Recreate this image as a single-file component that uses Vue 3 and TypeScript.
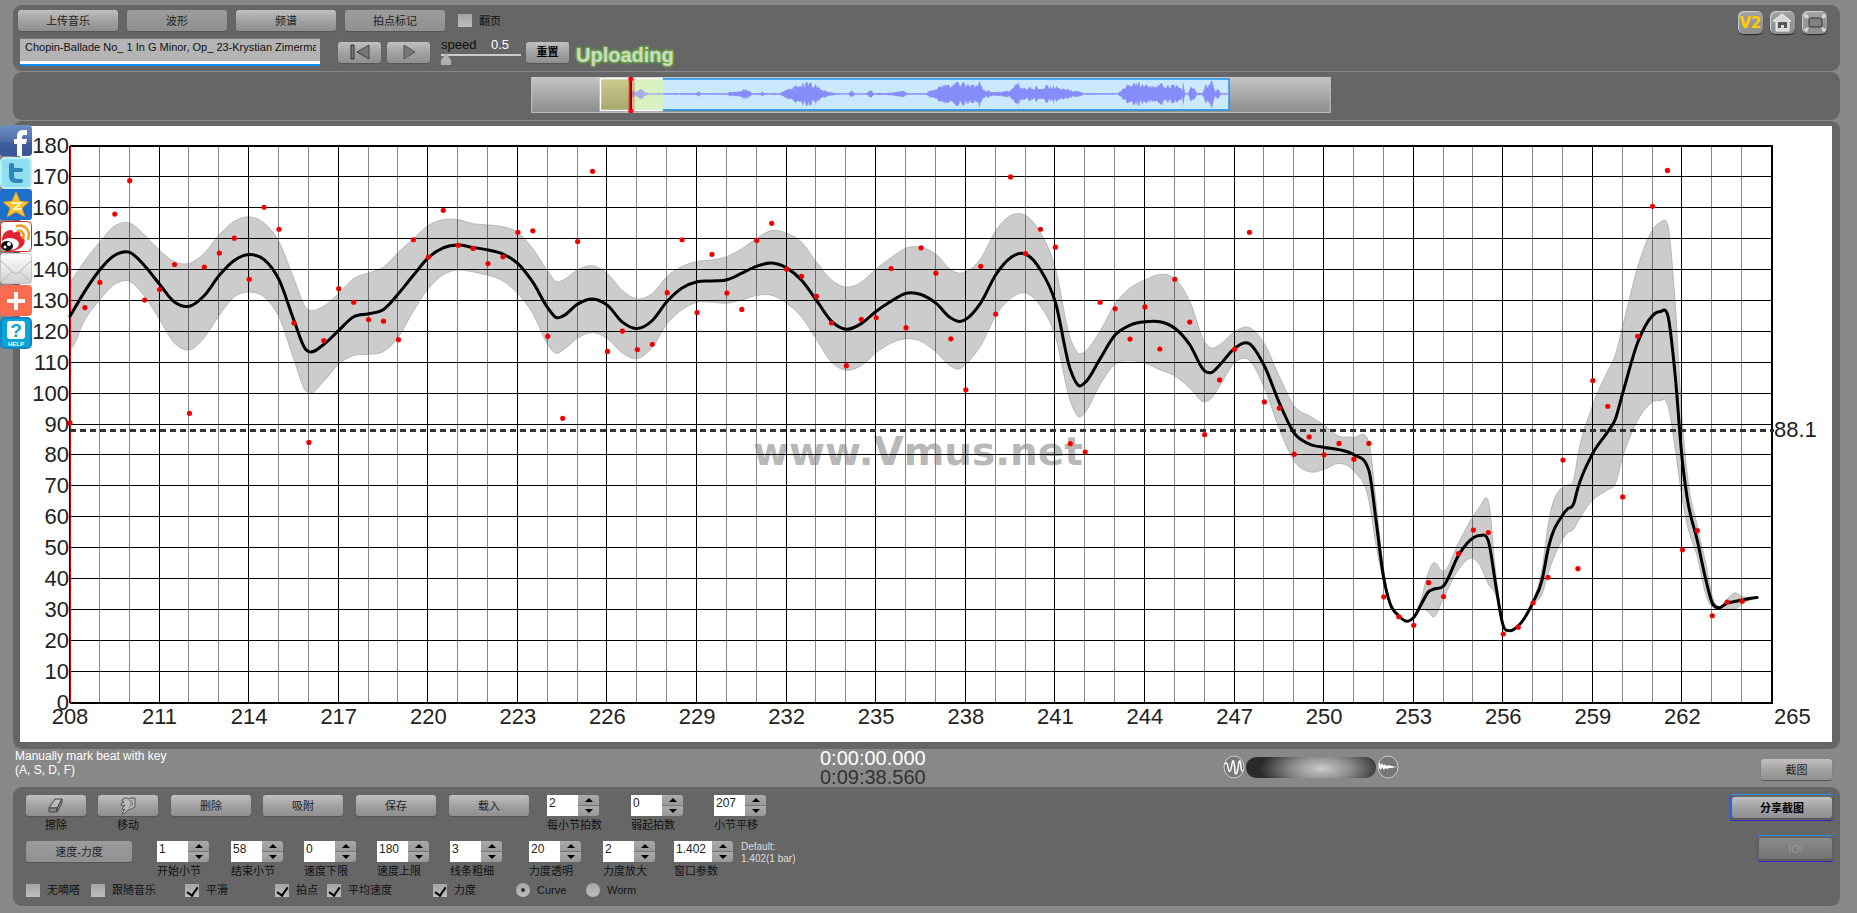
<script setup lang="ts">
import { ref } from 'vue'

type Row = [number, number, number, number]

interface Stepper {
  id: string
  label: string
  value: string
  wide?: boolean
}

const title = ref('Chopin-Ballade No_ 1 In G Minor, Op_ 23-Krystian Zimerman')
const speed = ref(0)
const volume = ref(50)
const mode = ref('curve')

/* Chart geometry, in view box units */
const LEFT = 50
const RIGHT = 1752
const TOP = 20
const BOTTOM = 577
const FIRST = 208
const LAST = 265
const px = (bar: number): number => LEFT + ((bar - FIRST) * (RIGHT - LEFT)) / (LAST - FIRST)
const py = (v: number): number => BOTTOM - (v * (BOTTOM - TOP)) / 180

const bars = Array.from({ length: LAST - FIRST }, (_, i) => FIRST + i)
const tempos = Array.from({ length: 19 }, (_, i) => i * 10)

/* Tempo of each half bar, starting at bar 208 */
const beats: number[] = [
  90.5, 127.8, 135.9, 158, 168.8, 130.2, 133.6, 141.7, 93.6, 140.9, 145.4, 150.2, 136.9, 160.2, 153.1, 122.8,
  84.2, 117.1, 133.9, 129.5, 123.9, 123.4, 117.4, 149.7, 144.1, 159.2, 147.9, 146.9, 142, 144.2, 152.1, 152.6,
  118.5, 92, 149.1, 171.8, 113.6, 120.2, 114.2, 115.9, 132.6, 149.7, 126.2, 145, 132.5, 127.2, 149.5, 155,
  140.2, 137.9, 131.4, 122.8, 109, 124, 124.5, 140.4, 121.3, 147.1, 138.9, 117.7, 101.2, 141.1, 125.7, 170,
  145.2, 153.1, 147.3, 83.8, 81.1, 129.5, 127.4, 117.6, 128, 114.4, 136.9, 123.1, 86.7, 104.4, 114.3, 152.1,
  97.3, 95.3, 80.4, 86, 80.2, 83.9, 78.8, 83.9, 34.3, 27.9, 25.1, 38.9, 34.4, 48.3, 55.9, 55.1, 22.3, 24.5,
  32.4, 40.6, 78.5, 43.4, 104.2, 95.9, 66.6, 118.5, 160.5, 172.1, 49.5, 55.7, 28.2, 32.6, 32.9,
]
const dots = beats.map((v, i) => ({ x: px(FIRST + i / 2), y: py(v) }))

/* Smoothed curve: bar, tempo, upper edge and lower edge of the loudness band */
const curve: Row[] = [
  [208, 125, 135.8, 114.5], [208.5, 133.1, 143, 123.9], [209, 140, 149, 130.3], [209.5, 144.7, 154.2, 135.3],
  [210, 145.6, 155.1, 136.2], [210.5, 141.3, 151.2, 131.4], [211, 135.3, 146.3, 123.9], [211.5, 129.6, 142.6, 116.3],
  [212, 128.2, 142.1, 114.1], [212.5, 131.7, 145.4, 118.1], [213, 138.2, 151.3, 125.3], [213.5, 143, 155.7, 131.2],
  [214, 144.9, 157.1, 132.8], [214.5, 143.3, 155.1, 131.2], [215, 136.8, 149, 124.7], [215.5, 123.7, 137.1, 111],
  [215.9, 114.2, 127.8, 100.8], [216, 113.6, 127.1, 100.2], [216.5, 115.9, 128.3, 104], [217, 120.4, 132.3, 109.5],
  [217.5, 124.8, 137.2, 112.3], [218, 125.8, 139, 112.7], [218.5, 127.2, 140.9, 113.6], [219, 132.3, 145.7, 118.3],
  [219.5, 138.2, 150, 126.7], [220, 143.9, 154.3, 133.9], [220.5, 147.1, 156.2, 138.4], [221, 148, 156.2, 139.9],
  [221.5, 147.2, 154.9, 139.3], [222, 146.4, 154.5, 138.2], [222.5, 145.1, 153.9, 136.4], [223, 142, 152.1, 132.3],
  [223.5, 136, 146.8, 125.8], [224, 127.7, 139.6, 115.9], [224.3, 124.5, 136.1, 112.9], [224.5, 125, 136.6, 114],
  [225, 128.9, 140, 117.9], [225.5, 130.6, 141.3, 119.7], [226, 128.5, 138.7, 117.7], [226.5, 123.1, 133.3, 113.1],
  [227, 121, 130.6, 111.3], [227.5, 123.6, 132.3, 115], [228, 129.8, 137.9, 122.6], [228.5, 134.1, 141.1, 127.1],
  [229, 136.1, 142.7, 129.5], [229.5, 136.4, 143.2, 129.5], [230, 136.8, 144.3, 129.2], [230.5, 138.9, 146.8, 130.3],
  [231, 141.2, 150.2, 131.7], [231.5, 142.2, 152.7, 131.8], [232, 140.6, 151.8, 129.2], [232.5, 136.6, 148.9, 124.7],
  [233, 130.1, 142.5, 117.5], [233.5, 123.4, 136.8, 110.2], [234, 120.8, 134.4, 107.5], [234.5, 122.6, 136, 109.1],
  [235, 126.6, 140.3, 113.2], [235.5, 129.8, 143.9, 116.3], [236, 132.4, 147, 117.7], [236.5, 132, 147.3, 116.9],
  [237, 129.2, 145, 113.4], [237.5, 124.4, 140, 108.8], [237.8, 123.3, 138.9, 108], [238, 124, 139.3, 109.5],
  [238.5, 129.3, 143.6, 115.5], [239, 138.3, 152.6, 125.1], [239.5, 143.9, 157.5, 130.7], [240, 145.1, 157.6, 132.5],
  [240.5, 140, 152, 128.3], [241, 129.5, 140.6, 118.5], [241.5, 107.8, 117.9, 97.6], [241.8, 102.5, 112.9, 92.4],
  [242, 103.6, 113.7, 94], [242.5, 111.3, 120.3, 103], [243, 118.9, 128.9, 109.5], [243.5, 122.1, 134.1, 110.6],
  [244, 123.2, 136.7, 109.8], [244.5, 123.2, 138.5, 107.7], [245, 121.1, 137.1, 105.7], [245.5, 115.8, 129.9, 101.8],
  [246, 107.3, 116.7, 97.3], [246.2, 106.7, 114.8, 98.2], [246.5, 109.2, 115.8, 102.4], [247, 114.6, 120, 109.9],
  [247.5, 116.1, 121.3, 110.7], [248, 108.9, 116.1, 101.8], [248.5, 97, 105.6, 88.6], [249, 87.2, 96, 78.2],
  [249.5, 83.7, 92.8, 74.7], [250, 82.6, 89.8, 75.5], [250.5, 81.9, 86.2, 77.4], [251, 80.2, 85.9, 74.9],
  [251.5, 75.1, 84.3, 65.3], [251.75, 58.1, 64, 50.3], [252, 40.2, 43, 39], [252.2, 32.4, 32.9, 32],
  [252.5, 28.2, 28.4, 28], [252.8, 26.4, 26.6, 26.2], [253, 27.6, 28, 27.2], [253.25, 31.8, 33.6, 30.2],
  [253.5, 36, 42.5, 29.4], [253.65, 36.7, 45.2, 27.8], [254, 37.8, 42.5, 33.9], [254.5, 47.7, 51.7, 43.1],
  [255, 53.4, 60.5, 46.7], [255.2, 54.1, 63.2, 44.8], [255.5, 52.4, 65.3, 38.5], [255.75, 38, 42, 34.8],
  [256, 24.9, 25.4, 24.4], [256.2, 23.4, 23.6, 23.2], [256.5, 24.9, 25.1, 24.7], [257, 32.6, 33.2, 32.2],
  [257.3, 39.8, 43.5, 35.2], [257.5, 49.7, 57.6, 41.8], [258, 60.9, 69.9, 53], [258.15, 62.7, 70.5, 55],
  [258.35, 64.2, 71.9, 56.1], [258.5, 69.5, 80.1, 58.7], [259, 80.7, 96.3, 65.6], [259.5, 87.7, 107.4, 68.9],
  [259.75, 91.6, 112.4, 70.8], [260, 100.1, 121.7, 79.4], [260.5, 116.4, 140.8, 91.3], [261, 125.2, 152.9, 97.2],
  [261.25, 126.5, 155.3, 97.8], [261.5, 125.6, 154.8, 96.6], [261.75, 106.5, 130.2, 82.7], [262, 78.1, 90.6, 65.6],
  [262.15, 66.8, 75, 58], [262.5, 52.4, 57, 47.1], [262.8, 39.2, 44.4, 34.5], [263, 32.3, 34.5, 31],
  [263.2, 30.8, 31.2, 30.4], [263.5, 32.3, 33.6, 30.6], [263.75, 32.8, 35.6, 30.2], [264, 33.3, 34.5, 32],
  [264.5, 34.1, 34.1, 34.1],
]

/* Cubic segments through the points of one column, with parabolic tangents */
function segments(column: 1 | 2 | 3, reverse: boolean): string {
  const pts = curve.map((r) => [px(r[0]), py(r[column])])
  if (reverse) pts.reverse()
  const slope = pts.map((p, i) => {
    if (i === 0 || i === pts.length - 1) return 0
    const h0 = p[0] - pts[i - 1][0]
    const h1 = pts[i + 1][0] - p[0]
    const a = (p[1] - pts[i - 1][1]) / h0
    const b = (pts[i + 1][1] - p[1]) / h1
    const m = (a * h1 + b * h0) / (h0 + h1)
    const limit = 3 * Math.max(1, Math.min(Math.abs(a), Math.abs(b)))
    return Math.sign(m) * Math.min(Math.abs(m), limit)
  })
  slope[0] = (pts[1][1] - pts[0][1]) / (pts[1][0] - pts[0][0])
  let d = `${pts[0][0].toFixed(1)} ${pts[0][1].toFixed(1)}`
  for (let i = 1; i < pts.length; i++) {
    const [x0, y0] = pts[i - 1]
    const [x1, y1] = pts[i]
    const h = (x1 - x0) / 3
    d += ` C${(x0 + h).toFixed(1)} ${(y0 + slope[i - 1] * h).toFixed(1)} ${(x1 - h).toFixed(1)} ${(y1 - slope[i] * h).toFixed(1)} ${x1.toFixed(1)} ${y1.toFixed(1)}`
  }
  return d
}
const meanPath = 'M' + segments(1, false)
const bandPath = 'M' + segments(2, false) + ' L' + segments(3, true) + ' Z'

/* Loudness envelope of the overview: x, half height */
const envelope: [number, number][] = [
  [101, 1], [102, 5], [104, 2], [106, 3], [110, 6], [114, 3], [117, 1], [165, 1], [168, 3], [171, 1], [196, 1],
  [200, 3], [206, 3], [209, 3], [214, 6], [218, 5], [221, 1], [229, 1], [232, 3], [235, 1], [248, 1], [252, 3],
  [256, 6], [262, 10], [273, 14], [283, 12], [290, 9], [294, 4], [300, 2], [305, 1], [318, 1], [321, 4], [325, 1],
  [336, 1], [340, 5], [344, 1], [363, 2], [372, 4], [378, 1], [396, 1], [401, 5], [404, 4], [409, 9], [414, 13],
  [430, 14], [445, 11], [451, 15], [455, 5], [462, 3], [470, 3], [480, 4], [485, 9], [490, 14], [494, 6], [500, 9],
  [512, 9], [525, 11], [532, 6], [542, 5], [550, 3], [555, 1], [588, 1], [593, 5], [598, 12], [604, 16], [612, 12],
  [630, 12], [642, 12], [650, 9], [653, 6], [654, 18], [656, 1], [659, 1], [662, 12], [666, 6], [668, 1], [673, 2],
  [678, 14], [683, 18], [686, 3], [688, 8], [692, 1], [700, 1],
]
function wavePath(): string {
  let up = ''
  let down = ''
  let k = 0
  let seed = 7
  for (let x = 101; x <= 700; x++) {
    while (k < envelope.length - 2 && envelope[k + 1][0] < x) k++
    const [x0, a0] = envelope[k]
    const [x1, a1] = envelope[k + 1]
    const base = a0 + ((a1 - a0) * (x - x0)) / (x1 - x0)
    seed = (seed * 1103 + 12345) % 65536
    const j = 0.45 + (0.5 * seed) / 65536
    const a = Math.max(0.6, base * j)
    up += ` L${x} ${(17 - a).toFixed(1)}`
    down = ` L${x} ${(17 + a).toFixed(1)}` + down
  }
  return 'M101 17' + up + down + ' Z'
}
const wave = wavePath()

const beatSteppers: Stepper[] = [
  { id: 'beats', label: '每小节拍数', value: '2' },
  { id: 'pickup', label: '弱起拍数', value: '0' },
  { id: 'shift', label: '小节平移', value: '207' },
]
const viewSteppers: Stepper[] = [
  { id: 'start', label: '开始小节', value: '1' },
  { id: 'end', label: '结束小节', value: '58' },
  { id: 'low', label: '速度下限', value: '0' },
  { id: 'high', label: '速度上限', value: '180' },
  { id: 'line', label: '线条粗细', value: '3' },
  { id: 'alpha', label: '力度透明', value: '20' },
  { id: 'gain', label: '力度放大', value: '2' },
  { id: 'window', label: '窗口参数', value: '1.402', wide: true },
]
const checks = [
  { label: '无嘀嗒', on: false },
  { label: '跟随音乐', on: false },
  { label: '平滑', on: true },
  { label: '拍点', on: true },
  { label: '平均速度', on: true },
  { label: '力度', on: true },
]
</script>

<template>
  <div class="page">
    <nav class="social" aria-label="Share">
      <a href="#facebook" aria-label="Facebook">
        <svg viewBox="0 0 32 32">
          <defs><linearGradient id="fb" x2="0" y2="1"><stop stop-color="#6e8fc6" /><stop offset="1" stop-color="#34508f" /></linearGradient></defs>
          <rect width="32" height="31" rx="4" fill="url(#fb)" />
          <path d="M0 17h32v10a4 4 0 0 1-4 4H4a4 4 0 0 1-4-4z" fill="#3b5998" opacity=".7" />
          <path d="M17 31V19h-3v-5h3v-3c0-4 3-6 6-6h4v5h-3c-1 0-2 1-2 2v2h5l-1 5h-4v12z" fill="#fff" />
        </svg>
      </a>
      <a href="#twitter" aria-label="Twitter">
        <svg viewBox="0 0 32 32">
          <rect x="1" y="1" width="30" height="30" rx="4" fill="#8fdff0" stroke="#b9f0f5" stroke-width="2" />
          <path d="M9 7q3-2 5 0v4h7q2 0 2 2t-2 2h-7v4q0 3 3 3h4q2 0 2 2t-2 2h-5q-7 0-7-7z" fill="#2c86b8" />
        </svg>
      </a>
      <a href="#qzone" aria-label="QZone">
        <svg viewBox="0 0 32 32">
          <rect width="32" height="31" rx="3" fill="#1c6fcb" />
          <path d="M16 3l4 9 9 1-7 6 3 9-9-5-9 5 3-9-7-6 9-1z" fill="#fdbf2d" stroke="#e69a10" stroke-width=".6" />
          <path d="M11 14h10l-7 6h8" fill="none" stroke="#fff3b0" stroke-width="2" />
        </svg>
      </a>
      <a href="#weibo" aria-label="Weibo">
        <svg viewBox="0 0 32 32">
          <rect x=".5" y=".5" width="31" height="30" rx="4" fill="#fff" stroke="#c92a1e" />
          <path d="M2 19c0-6 4-10 9-10 2 0 2 2 3 3 4-3 8-1 6 3 4 1 6 4 4 8-2 4-8 7-13 7-5 0-9-5-9-11z" fill="#e02431" />
          <ellipse cx="10" cy="23" rx="9" ry="6" fill="#fff" />
          <ellipse cx="7" cy="25" rx="6" ry="5" fill="#111" />
          <circle cx="9" cy="23" r="2" fill="#fff" /><circle cx="5" cy="26" r="1.500" fill="#fff" />
          <path d="M18 10c4-1 7 3 5 7M17 5c8-2 14 5 11 13" fill="none" stroke="#f5991f" stroke-width="2.500" stroke-linecap="round" />
        </svg>
      </a>
      <a href="#mail" aria-label="Mail">
        <svg viewBox="0 0 32 32">
          <defs><linearGradient id="ml" x2="0" y2="1"><stop stop-color="#fff" /><stop offset="1" stop-color="#cfcfcf" /></linearGradient></defs>
          <rect x=".5" y=".5" width="31" height="30" rx="3" fill="url(#ml)" stroke="#c4c4c4" />
          <path d="M1 8l13 12q2 2 4 0L31 8M1 29l11-10M31 29L20 19" fill="none" stroke="#b3b3b3" />
        </svg>
      </a>
      <a href="#more" aria-label="More">
        <svg viewBox="0 0 32 32">
          <rect width="32" height="31" rx="4" fill="#fa6b4f" />
          <path d="M14 7h4v7h7v4h-7v7h-4v-7H7v-4h7z" fill="#fff" />
        </svg>
      </a>
      <a href="#help" aria-label="Help">
        <svg viewBox="0 0 32 32">
          <rect x="1" y="1" width="30" height="30" rx="4" fill="#0aa5d6" stroke="#0b86c6" stroke-width="2" />
          <rect x="7" y="4" width="18" height="18" rx="3" fill="#fff" />
          <text x="16" y="20" class="help-mark">?</text>
          <text x="16" y="29" class="help-word">HELP</text>
        </svg>
      </a>
    </nav>

    <header class="panel top">
      <div class="tools">
        <div class="line first">
          <button class="btn w100">上传音乐</button>
          <button class="btn w100 flat">波形</button>
          <button class="btn w100">频谱</button>
          <button class="btn w100 flat">拍点标记</button>
          <label class="tick"><input type="checkbox" />翻页</label>
        </div>
        <div class="line second">
          <input v-model="title" class="title" type="text" aria-label="Title" />
          <div class="transport">
            <button class="btn w43" aria-label="Back to start">
              <svg width="22" height="16" viewBox="0 0 22 16"><path d="M2 1h3v14H2z" fill="#777" stroke="#333" /><path d="M20 1v14L8 8z" fill="#777" stroke="#444" /></svg>
            </button>
            <button class="btn w43" aria-label="Play">
              <svg width="16" height="16" viewBox="0 0 16 16"><path d="M3 1v14l11-7z" fill="#777" stroke="#555" /></svg>
            </button>
          </div>
          <div class="speed">
            <label for="speed">speed</label><output for="speed">0.5</output>
            <input id="speed" v-model.number="speed" type="range" min="0" max="100" />
          </div>
          <button class="btn w43 strong">重置</button>
          <span class="uploading">Uploading</span>
        </div>
      </div>
      <div class="corner">
        <button class="chip" aria-label="Version 2"><span>V2</span></button>
        <button class="chip" aria-label="Home">
          <svg width="24" height="22" viewBox="0 0 24 22"><path d="M11 2l9 7h-2v10H5V9H2z" fill="#d8d8d8" stroke="#ececec" stroke-linejoin="round" /><path d="M7 16v-6h9v6h-3v-3h-3v3z" fill="#555" /></svg>
        </button>
        <button class="chip" aria-label="Full screen">
          <svg width="24" height="22" viewBox="0 0 24 22"><rect x="6" y="6" width="13" height="9" rx="2" fill="#808080" stroke="#333" /><path d="M5 3H2v3M19 3h3v3M5 19H2v-3M19 19h3v-3" fill="none" stroke="#ddd" /><path d="M2 3l3 3M22 3l-3 3M2 19l3-3M22 19l-3-3" stroke="#ddd" stroke-width="2" /></svg>
        </button>
      </div>
    </header>

    <section class="panel overview">
      <svg class="strip" viewBox="0 0 802 36" role="img" aria-label="Waveform overview">
        <defs>
          <linearGradient id="base" x2="0" y2="1"><stop stop-color="#c4c4c4" /><stop offset="1" stop-color="#8c8c8c" /></linearGradient>
          <linearGradient id="olive" x2="0" y2="1"><stop stop-color="#cccb8e" /><stop offset="1" stop-color="#a8a76c" /></linearGradient>
        </defs>
        <rect x=".5" y=".5" width="801" height="35" fill="url(#base)" stroke="#c6c6c6" />
        <rect x="70" y="2" width="630" height="31" fill="#cbe9fd" stroke="#1893f0" stroke-width="1.5" />
        <rect x="70" y="2" width="30" height="31" fill="url(#olive)" />
        <rect x="101" y="2" width="31" height="31" fill="#d9f0c0" />
        <path d="M132 1.5H69.500V33.500H132" fill="none" stroke="#fff" stroke-width="1.500" />
        <path :d="wave" fill="#868cfa" />
        <rect x="101" y="3" width="31" height="29" fill="#d9f0c0" opacity=".35" />
        <rect x="97" y="2" width="7" height="32" fill="#e01010" opacity=".25" />
        <path d="M99.500 2v32" stroke="#c00" stroke-width="2" />
        <path d="M100.500 2v32" stroke="#400" />
        <circle cx="100" cy="2" r="2.500" fill="#f00" /><circle cx="100" cy="34" r="2.500" fill="#f00" />
      </svg>
    </section>

    <main class="panel stage">
      <svg class="chart" viewBox="0 0 1812 616" role="img" aria-label="Tempo curve">
        <g class="minor">
          <path v-for="b in bars.filter((n) => (n - FIRST) % 3)" :key="b" :d="`M${Math.round(px(b)) - 0.5} ${TOP}V${BOTTOM}`" />
        </g>
        <text x="898" y="339" class="mark">www.Vmus.net</text>
        <path :d="bandPath" class="band" />
        <g class="major">
          <path v-for="b in bars.filter((n) => (n - FIRST) % 3 === 0)" :key="b" :d="`M${Math.round(px(b)) - 0.5} ${TOP}V${BOTTOM}`" />
          <path v-for="t in tempos" :key="t" :d="`M${LEFT} ${Math.round(py(t)) - 0.5}H${RIGHT}`" />
        </g>
        <path :d="`M${LEFT} ${TOP}H${RIGHT}V${BOTTOM}H${LEFT}`" class="frame" />
        <path :d="`M${LEFT + 0.5} ${TOP}V${BOTTOM}`" class="cursor" />
        <path :d="`M${LEFT} ${py(88.1)}H${RIGHT + 2}`" class="average" />
        <path :d="meanPath" class="mean" />
        <g v-for="(d, i) in dots" :key="i">
          <circle :cx="d.x" :cy="d.y" r="2.600" fill="#f00" /><circle :cx="d.x" :cy="d.y" r=".8" fill="#8a1010" />
        </g>
        <g class="axis">
          <text v-for="t in tempos" :key="t" x="49" :y="py(t) + 7" text-anchor="end">{{ t }}</text>
          <text v-for="b in bars.filter((n) => (n - FIRST) % 3 === 0)" :key="b" :x="px(b)" y="598" text-anchor="middle">{{ b }}</text>
          <text x="1754" y="598">265</text>
          <text x="1754" :y="py(88.1) + 7">88.1</text>
        </g>
      </svg>
    </main>

    <div class="status">
      <p class="hint">Manually mark beat with key<br />(A, S, D, F)</p>
      <p class="clock"><span>0:00:00.000</span><span class="total">0:09:38.560</span></p>
      <div class="zoom">
        <svg width="22" height="24" viewBox="0 0 22 24"><ellipse cx="11" cy="12" rx="10" ry="11" fill="#777" stroke="#ccc" /><path d="M2 9q2-3 3 3t2 4q1-1 2-7t2-1q1 4 1 10 2 3 3-5t2-7q1 2 1 6t2 4" fill="none" stroke="#fff" stroke-width="1.500" /></svg>
        <input v-model.number="volume" type="range" aria-label="Waveform zoom" />
        <svg width="22" height="24" viewBox="0 0 22 24"><ellipse cx="11" cy="12" rx="10" ry="11" fill="#777" stroke="#ccc" /><path d="M2 7l2 3 1-2 2 3 1-2 2 2 2-1 2 1 6 1-6 1-2 0-2 1-2-1-1 2-2-3-1 3-2-2z" fill="#fff" /></svg>
      </div>
      <button class="btn shot">截图</button>
    </div>

    <footer class="panel bottom">
      <div class="controls">
        <div class="row edit">
          <div class="cell centred">
            <button id="erase" class="btn w60" aria-label="擦除">
              <svg width="18" height="16" viewBox="0 0 18 16"><path d="M2 10L8 1h7l-5 9z" fill="#bbb" stroke="#444" /><path d="M2 10h8v4H2zM10 10l5-9v4l-5 9z" fill="#888" stroke="#444" /></svg>
            </button>
            <label for="erase">擦除</label>
          </div>
          <div class="cell centred">
            <button id="move" class="btn w60" aria-label="移动">
              <svg width="18" height="18" viewBox="0 0 18 18"><path d="M3 3l3-2h2l2 1 2-1h4v9l-4 2-3 1-4 4H3l3-5-2 1-1-1 3-4-3 1-1-2 3-2-2-1z" fill="#bbb" stroke="#555" stroke-linejoin="round" /><path d="M10 3q4 3 0 8M12 3q3 3 1 6" fill="none" stroke="#777" /></svg>
            </button>
            <label for="move">移动</label>
          </div>
          <button class="btn w80">删除</button>
          <button class="btn w80">吸附</button>
          <button class="btn w80">保存</button>
          <button class="btn w80">载入</button>
          <div v-for="s in beatSteppers" :key="s.id" class="cell">
            <div class="stepper">
              <input :id="s.id" type="text" :value="s.value" />
              <span class="spin"><button aria-label="Up"></button><button aria-label="Down"></button></span>
            </div>
            <label :for="s.id">{{ s.label }}</label>
          </div>
        </div>
        <div class="row view">
          <button class="btn w106 flat">速度-力度</button>
          <div v-for="s in viewSteppers" :key="s.id" class="cell">
            <div class="stepper" :class="{ wide: s.wide }">
              <input :id="s.id" type="text" :value="s.value" />
              <span class="spin"><button aria-label="Up"></button><button aria-label="Down"></button></span>
            </div>
            <label :for="s.id">{{ s.label }}</label>
          </div>
          <p class="default">Default:<br />1.402(1 bar)</p>
        </div>
        <div class="row flags">
          <label v-for="c in checks" :key="c.label" class="tick"><input type="checkbox" :checked="c.on" />{{ c.label }}</label>
          <label class="tick"><input v-model="mode" type="radio" name="mode" value="curve" />Curve</label>
          <label class="tick"><input v-model="mode" type="radio" name="mode" value="worm" />Worm</label>
        </div>
      </div>
      <div class="share">
        <span class="glow"><button class="btn w100 strong">分享截图</button></span>
        <span class="glow"><button class="btn w73" disabled>IOI</button></span>
      </div>
    </footer>
  </div>
</template>

<style>
html,
body {
  margin: 0;
  background: #888;
}
</style>

<style scoped>
.page {
  position: relative;
  box-sizing: border-box;
  min-height: 100vh;
  padding: 5px 17px 7px 13px;
  display: flex;
  flex-direction: column;
  background: #888;
  color: #111;
  font: 11px/14px 'Liberation Sans', 'Noto Sans CJK SC', sans-serif;
}
.page * {
  box-sizing: border-box;
}
.page p {
  margin: 0;
}
.page button,
.page input {
  font: inherit;
  margin: 0;
  padding: 0;
}
.panel {
  background: #666;
  border-radius: 9px;
}
.social {
  position: absolute;
  left: 0;
  top: 125px;
  display: flex;
  flex-direction: column;
}
.social a,
.social svg {
  display: block;
  width: 32px;
  height: 32px;
}
.help-mark {
  font: bold 19px 'Liberation Sans', sans-serif;
  fill: #0aa5d6;
  text-anchor: middle;
}
.help-word {
  font: bold 6px 'Liberation Sans', sans-serif;
  fill: #fff;
  text-anchor: middle;
}
.page .btn {
  display: flex;
  align-items: center;
  justify-content: center;
  height: 21px;
  border: 0;
  border-radius: 3px;
  background: linear-gradient(#c0c0c0, #a2a2a2 50%, #8f8f8f);
  box-shadow: 0 1px 1px #555;
  color: #222;
}
.page .btn.flat {
  background: linear-gradient(#9c9c9c, #909090);
}
.page .btn.strong {
  font-weight: bold;
  color: #000;
}
.page .btn:disabled {
  background: linear-gradient(#8a8a8a, #737373);
  color: #999;
}
.w43 { width: 43px; }
.w60 { width: 60px; }
.w73 { width: 73px; }
.w80 { width: 80px; }
.w100 { width: 100px; }
.w106 { width: 106px; }
.top {
  display: flex;
  justify-content: space-between;
  height: 66px;
  padding: 5px 13px 4px 5px;
  margin-bottom: 1px;
}
.line {
  display: flex;
  align-items: center;
}
.first {
  gap: 9px;
  height: 21px;
}
.first .tick {
  margin-left: 4px;
}
.second {
  height: 34px;
  margin-top: 4px;
  padding-left: 2px;
}
.page .title {
  width: 300px;
  height: 28px;
  padding: 0 4px 8px 5px;
  border: 0;
  border-bottom: 2px solid #0a8ff5;
  background: linear-gradient(#777 0 1px, #b4b4b4 1px 23px, #fff 23px);
  font-size: 11px;
  color: #111;
  outline: none;
}
.transport {
  display: flex;
  gap: 6px;
  margin-left: 18px;
}
.speed {
  display: grid;
  grid-template-columns: 50px 30px;
  width: 80px;
  margin: 0 5px 0 11px;
  height: 28px;
  font-size: 13px;
  line-height: 14px;
}
.speed output {
  color: #fff;
}
.page .speed input {
  grid-column: 1 / 3;
  width: 80px;
  height: 14px;
  appearance: none;
  background: linear-gradient(transparent 2px, #ccc 2px 4px, transparent 4px);
}
.speed input::-webkit-slider-thumb {
  appearance: none;
  width: 10px;
  height: 12px;
  background: #b0b0b0;
  clip-path: polygon(50% 0, 100% 60%, 100% 100%, 0 100%, 0 60%);
}
.uploading {
  margin: 5px 0 0 7px;
  font: bold 20px/24px 'Liberation Sans', sans-serif;
  color: #d4d4d4;
  text-shadow: 0 0 3px #6c3, 0 0 3px #6c3, 0 0 2px #6c3;
}
.corner {
  display: flex;
  gap: 7px;
  padding-top: 1px;
}
.chip {
  width: 25px;
  height: 23px;
  display: flex;
  align-items: center;
  justify-content: center;
  border: 0;
  border-radius: 6px;
  background: linear-gradient(#a2a2a2, #8d8d8d);
  box-shadow: inset 1px 1px 1px #d0d0d0, 0 1px 1px #222;
}
.chip span {
  font: bold 15px 'DejaVu Sans', sans-serif;
  color: #fc0;
}
.tick {
  display: flex;
  align-items: center;
  gap: 7px;
  white-space: nowrap;
}
.tick input {
  appearance: none;
  display: grid;
  place-content: center;
  flex: none;
  width: 14px;
  height: 13px;
  background: linear-gradient(#a5a5a5, #bdbdbd);
}
.tick input[type='checkbox']:checked::before {
  content: '';
  width: 5px;
  height: 9px;
  border: solid #000;
  border-width: 0 2px 2px 0;
  transform: rotate(35deg);
}
.tick input[type='radio'] {
  height: 14px;
  border-radius: 50%;
}
.tick input[type='radio']:checked::before {
  content: '';
  width: 4px;
  height: 4px;
  border-radius: 50%;
  background: #333;
}
.overview {
  display: flex;
  justify-content: center;
  align-items: center;
  height: 48px;
  margin-bottom: 1px;
  padding: 0 0 2px 9px;
}
.strip {
  display: block;
  width: 44%;
}
.stage {
  padding: 5px 8px 7px 7px;
}
.chart {
  display: block;
  width: 100%;
  background: #fff;
}
.minor path {
  stroke: #888;
}
.major path {
  stroke: #000;
}
.frame {
  fill: none;
  stroke: #000;
  stroke-width: 2;
}
.cursor {
  stroke: #d00;
}
.band {
  fill: #000;
  fill-opacity: 0.2;
  stroke: #999;
  stroke-width: 0.6;
}
.average {
  stroke: #333;
  stroke-width: 3;
  stroke-dasharray: 6 4;
}
.mean {
  fill: none;
  stroke: #000;
  stroke-width: 3;
  stroke-linecap: round;
}
.axis text {
  font: 22px 'Liberation Sans', sans-serif;
  fill: #222;
}
.mark {
  font: bold 39px 'DejaVu Sans', sans-serif;
  fill: #888;
  fill-opacity: 0.62;
  text-anchor: middle;
}
.status {
  display: grid;
  grid-template-columns: 807px 407px 1fr auto;
  align-items: start;
  height: 38px;
  padding-right: 8px;
}
.hint {
  padding: 0 0 0 2px;
  font-size: 12px;
  line-height: 14px;
  color: #fff;
}
.clock {
  display: flex;
  flex-direction: column;
  font-size: 20px;
  line-height: 19px;
  color: #fff;
}
.clock .total {
  color: #333;
}
.zoom {
  display: flex;
  align-items: center;
  gap: 1px;
  margin-left: -4px;
  height: 36px;
}
.page .zoom input {
  appearance: none;
  width: 130px;
  height: 21px;
  border-radius: 11px;
  background: radial-gradient(ellipse 62px 26px at 58% 55%, #ccc, #888 50%, #2a2a2a);
}
.zoom input::-webkit-slider-thumb {
  appearance: none;
  width: 10px;
  height: 20px;
}
.page .shot {
  width: 71px;
  margin-top: 10px;
}
.bottom {
  display: flex;
  justify-content: space-between;
  height: 119px;
  padding: 8px 6px 8px 13px;
}
.row {
  display: grid;
  align-items: start;
}
.edit {
  grid-template-columns: 72px 73px 92px 93px 93px 98px 84px 83px auto;
  height: 46px;
}
.view {
  grid-template-columns: 131px 74px 73px 73px 73px 79px 74px 71px 67px auto;
  height: 42px;
}
.flags {
  grid-template-columns: 65px 94px 90px 52px 106px 83px 70px auto;
  align-items: center;
}
.cell {
  display: flex;
  flex-direction: column;
  gap: 2px;
  white-space: nowrap;
}
.centred {
  width: 60px;
  align-items: center;
}
.stepper {
  display: flex;
  width: 52px;
  height: 21px;
}
.page .stepper input {
  flex: 1;
  min-width: 0;
  border: 0;
  padding: 0 0 5px 2px;
  background: #fff;
  color: #222;
  font-size: 12px;
}
.stepper.wide {
  width: 59px;
}
.spin {
  display: flex;
  flex-direction: column;
  width: 21px;
}
.spin button {
  display: grid;
  place-content: center;
  flex: 1;
  border: 0;
  background: linear-gradient(#aaa, #989898);
  border-radius: 0 3px 0 0;
}
.spin button + button {
  border-top: 1px solid #777;
  border-radius: 0 0 3px 0;
}
.spin button::before {
  content: '';
  border: 4px solid transparent;
  border-top: 0;
  border-bottom-color: #000;
}
.spin button + button::before {
  border: 4px solid transparent;
  border-bottom: 0;
  border-top-color: #000;
}
.default {
  font-size: 10px;
  line-height: 12px;
  color: #ddd;
}
.share {
  display: flex;
  flex-direction: column;
  align-items: flex-end;
  gap: 15px;
}
.glow {
  padding: 2px 1px;
  border: 1px solid;
  border-color: #2f8fff #3355dd #3a1fc0;
  border-radius: 3px;
}
.share .glow {
  margin-top: -1px;
}
</style>
